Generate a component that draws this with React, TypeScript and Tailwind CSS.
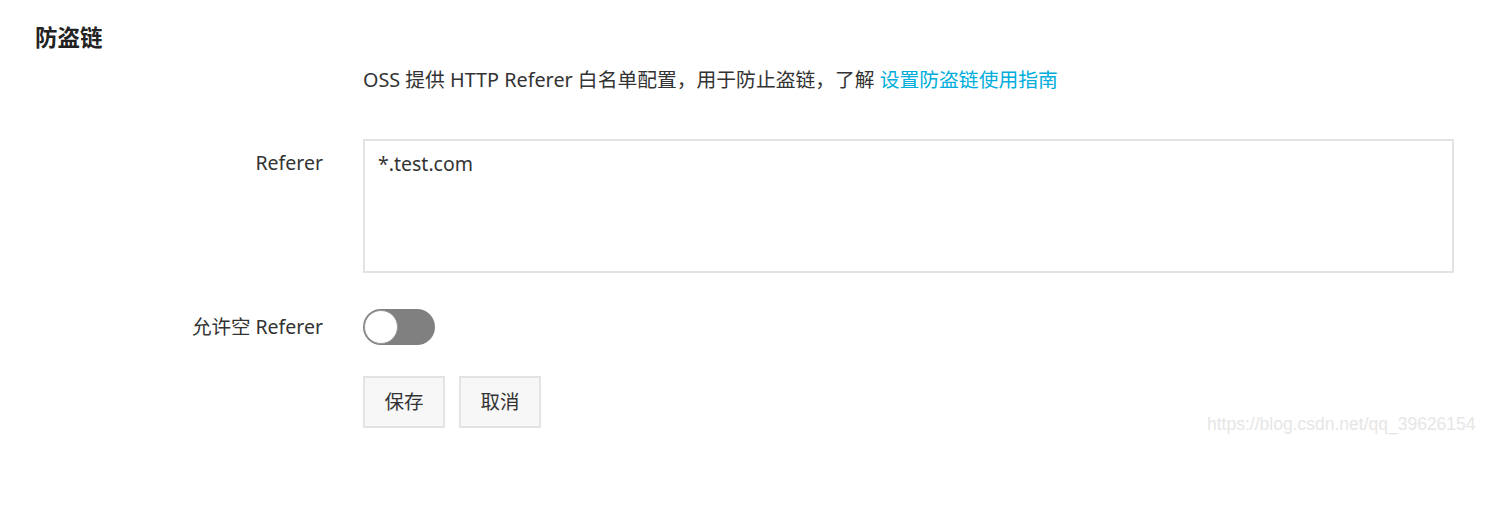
const App = () => {
  return (
    <div
      className="relative w-[1496px] h-[530px] bg-white text-[#333] overflow-hidden"
      style={{ fontFamily: '"Noto Sans", "Noto Sans CJK SC", sans-serif' }}
    >
      <div className="ml-[35px] pt-[23px]">
        <div className="h-[30px] leading-[30px] text-[22.5px] font-bold text-[#222]">防盗链</div>
      </div>

      <div className="ml-[363px] mt-[13px] h-[28px] leading-[28px] text-[19.8px] whitespace-nowrap">
        OSS 提供 HTTP Referer 白名单配置，用于防止盗链，了解{" "}
        <a className="text-[#00addb]">设置防盗链使用指南</a>
      </div>

      <div className="mt-[45px] grid grid-cols-[323px_1fr] gap-x-[40px] pr-[42px]">
        <div className="text-right text-[19.5px] leading-[28px] pt-[10px]">Referer</div>
        <div className="h-[134px] border-2 border-[#e3e3e3] px-[13px] py-[9px] text-[19.5px] leading-[28px]">
          *.test.com
        </div>

        <div className="mt-[36px] h-[36px] flex items-center justify-end text-[19.5px] whitespace-nowrap">
          允许空 Referer
        </div>
        <div className="mt-[36px] h-[36px] flex items-center">
          <div className="w-[72px] h-[36px] rounded-full bg-[#808080] p-[1px] flex items-center">
            <div className="w-[34px] h-[34px] rounded-full bg-white border border-[#999]" />
          </div>
        </div>

        <div />
        <div className="mt-[31px] flex gap-[14px]">
          <button className="w-[82px] h-[52px] border-2 border-[#e3e3e3] bg-[#f7f7f7] text-[19.5px] text-[#333]">
            保存
          </button>
          <button className="w-[82px] h-[52px] border-2 border-[#e3e3e3] bg-[#f7f7f7] text-[19.5px] text-[#333]">
            取消
          </button>
        </div>
      </div>

      <div
        className="absolute left-[1207px] top-[412px] text-[17.5px] leading-[24px] text-[#e6e6e6] whitespace-nowrap"
        style={{ fontFamily: '"Liberation Sans", Arial, sans-serif' }}
      >
        https://blog.csdn.net/qq_39626154
      </div>
    </div>
  );
};

export default App;
